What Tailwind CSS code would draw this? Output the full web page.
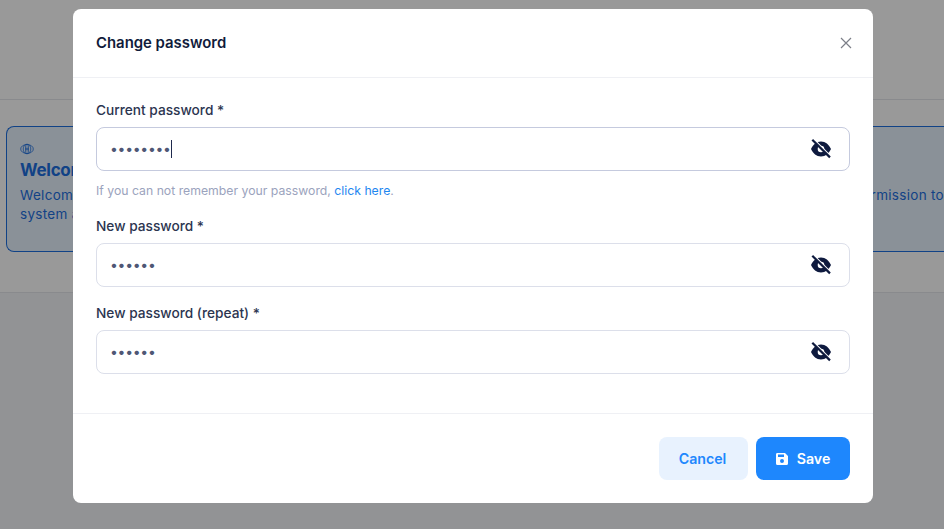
<!DOCTYPE html>
<html lang="en">
<head>
<meta charset="utf-8">
<script src="https://cdn.jsdelivr.net/npm/@tailwindcss/browser@4"></script>
</head>
<body class="font-['Inter','Liberation_Sans',sans-serif]">
<div class="relative w-[944px] h-[529px] overflow-hidden bg-[#f4f5f8]">
  <div class="h-[100px] bg-white border-b border-[#e5e7eb]"></div>
  <div class="h-[193px] bg-white border-b border-[#e5e7eb] pt-[26px] px-[6px]">
    <div class="h-[126px] w-[938px] rounded-l-lg border-y border-l border-[#1d6fe0] bg-[#e7f2fe] pl-[13px] pt-[15px] text-[#1d6fe0]">
      <svg class="w-[14px] h-[14px]" viewBox="0 0 14 14" fill="none" stroke="currentColor" stroke-width="0.800"><ellipse cx="7" cy="7" rx="6.300" ry="4.500"/><ellipse cx="7" cy="7" rx="3.800" ry="4.800"/><ellipse cx="7" cy="7" rx="1.500" ry="4.800"/><circle cx="7" cy="7" r="1"/></svg>
      <div class="mt-[3px] text-[17px] leading-[22px] font-bold tracking-[-0.3px]">Welcome</div>
      <div class="mt-[5px] text-[13.5px] tracking-[0.3px] leading-[19px] flex justify-between"><span>Welcome</span><span>permission to</span></div>
      <div class="text-[13.5px] tracking-[0.3px] leading-[19px]">system a</div>
    </div>
  </div>
  <div class="absolute inset-0 bg-black/40"></div>
  <div class="absolute left-[73px] top-[9px] w-[800px] h-[494px] rounded-lg bg-white flex flex-col">
    <div class="h-[69px] shrink-0 border-b border-[#eff0f4] pl-[23px] pr-[21px] flex items-center justify-between">
      <h2 class="text-[14.9px] font-semibold text-[#101b3b]">Change password</h2>
      <svg class="w-[12px] h-[12px] text-[#7c7f88]" viewBox="0 0 12 12" fill="none" stroke="currentColor" stroke-width="1.200"><path d="M1 1l10 10M11 1L1 11"/></svg>
    </div>
    <div class="flex-1 px-[23px] pt-[22px] flex flex-col">
      <label class="text-[13.7px] leading-[20px] font-[450] text-[#2c3550]">Current password *</label>
      <div class="mt-[7px] h-[44px] rounded-lg border border-[#c5cade] pl-[13px] pr-[14px] flex items-center justify-between">
        <span class="text-[#4f5775] text-[14px] tracking-[-0.3px] border-r border-[#1f2a4d] leading-[18px]">••••••••</span>
        <svg class="w-[24px] h-[24px] mr-[2px] text-[#0e1a3e]" viewBox="0 0 24 24" fill="currentColor"><path fill-rule="evenodd" d="M12 4.500C7.500 4.500 4 7.500 2 12c2 4.500 5.500 7.500 10 7.500s8-3 10-7.500c-2-4.500-5.500-7.500-10-7.500zm0 10.800a3.300 3.300 0 1 1 0-6.600 3.300 3.300 0 0 1 0 6.600z"/><path d="M4.800 2.200l18 18" stroke="#fff" stroke-width="1.500"/><path d="M3.300 2.700l17.700 17.700" stroke="currentColor" stroke-width="2.200"/></svg>
      </div>
      <p class="mt-[12px] text-[12.25px] leading-[16px] text-[#9ba3bd]">If you can not remember your password, <span class="text-[#1e87f0]">click here</span>.</p>
      <label class="mt-[17px] text-[13.7px] leading-[20px] font-[450] text-[#2c3550]">New password *</label>
      <div class="mt-[7px] h-[44px] rounded-lg border border-[#dcdfea] pl-[13px] pr-[14px] flex items-center justify-between">
        <span class="text-[#4f5775] text-[14px] tracking-[-0.3px] leading-[18px]">••••••</span>
        <svg class="w-[24px] h-[24px] mr-[2px] text-[#0e1a3e]" viewBox="0 0 24 24" fill="currentColor"><path fill-rule="evenodd" d="M12 4.500C7.500 4.500 4 7.500 2 12c2 4.500 5.500 7.500 10 7.500s8-3 10-7.500c-2-4.500-5.500-7.500-10-7.500zm0 10.800a3.300 3.300 0 1 1 0-6.600 3.300 3.300 0 0 1 0 6.600z"/><path d="M4.800 2.200l18 18" stroke="#fff" stroke-width="1.500"/><path d="M3.300 2.700l17.700 17.700" stroke="currentColor" stroke-width="2.200"/></svg>
      </div>
      <label class="mt-[16px] text-[13.7px] leading-[20px] font-[450] text-[#2c3550]">New password (repeat) *</label>
      <div class="mt-[7px] h-[44px] rounded-lg border border-[#dcdfea] pl-[13px] pr-[14px] flex items-center justify-between">
        <span class="text-[#4f5775] text-[14px] tracking-[-0.3px] leading-[18px]">••••••</span>
        <svg class="w-[24px] h-[24px] mr-[2px] text-[#0e1a3e]" viewBox="0 0 24 24" fill="currentColor"><path fill-rule="evenodd" d="M12 4.500C7.500 4.500 4 7.500 2 12c2 4.500 5.500 7.500 10 7.500s8-3 10-7.500c-2-4.500-5.500-7.500-10-7.500zm0 10.800a3.300 3.300 0 1 1 0-6.600 3.300 3.300 0 0 1 0 6.600z"/><path d="M4.800 2.200l18 18" stroke="#fff" stroke-width="1.500"/><path d="M3.300 2.700l17.700 17.700" stroke="currentColor" stroke-width="2.200"/></svg>
      </div>
    </div>
    <div class="h-[90px] shrink-0 border-t border-[#eff0f4] px-[23px] pt-[23px] flex justify-end gap-[8px]">
      <button class="w-[89px] h-[43px] rounded-lg bg-[#e8f2fe] text-[#1e87fd] text-[14.2px] font-semibold pr-[2px]">Cancel</button>
      <button class="w-[94px] h-[43px] rounded-lg bg-[#1e87fd] text-white text-[14.2px] font-semibold flex items-center justify-center gap-[8px] pr-[1px]">
        <svg class="w-[14px] h-[14px]" viewBox="0 0 14 14" fill="currentColor"><path fill-rule="evenodd" d="M2 1h8l3 3v7.500A1.500 1.500 0 0 1 11.500 13h-9A1.500 1.500 0 0 1 1 11.500v-9A1.500 1.500 0 0 1 2 1zm1 1.500V5h6V2.500H3zM7 7a2 2 0 1 0 0 4 2 2 0 0 0 0-4z"/></svg>
        Save
      </button>
    </div>
  </div>
</div>
</body>
</html>
